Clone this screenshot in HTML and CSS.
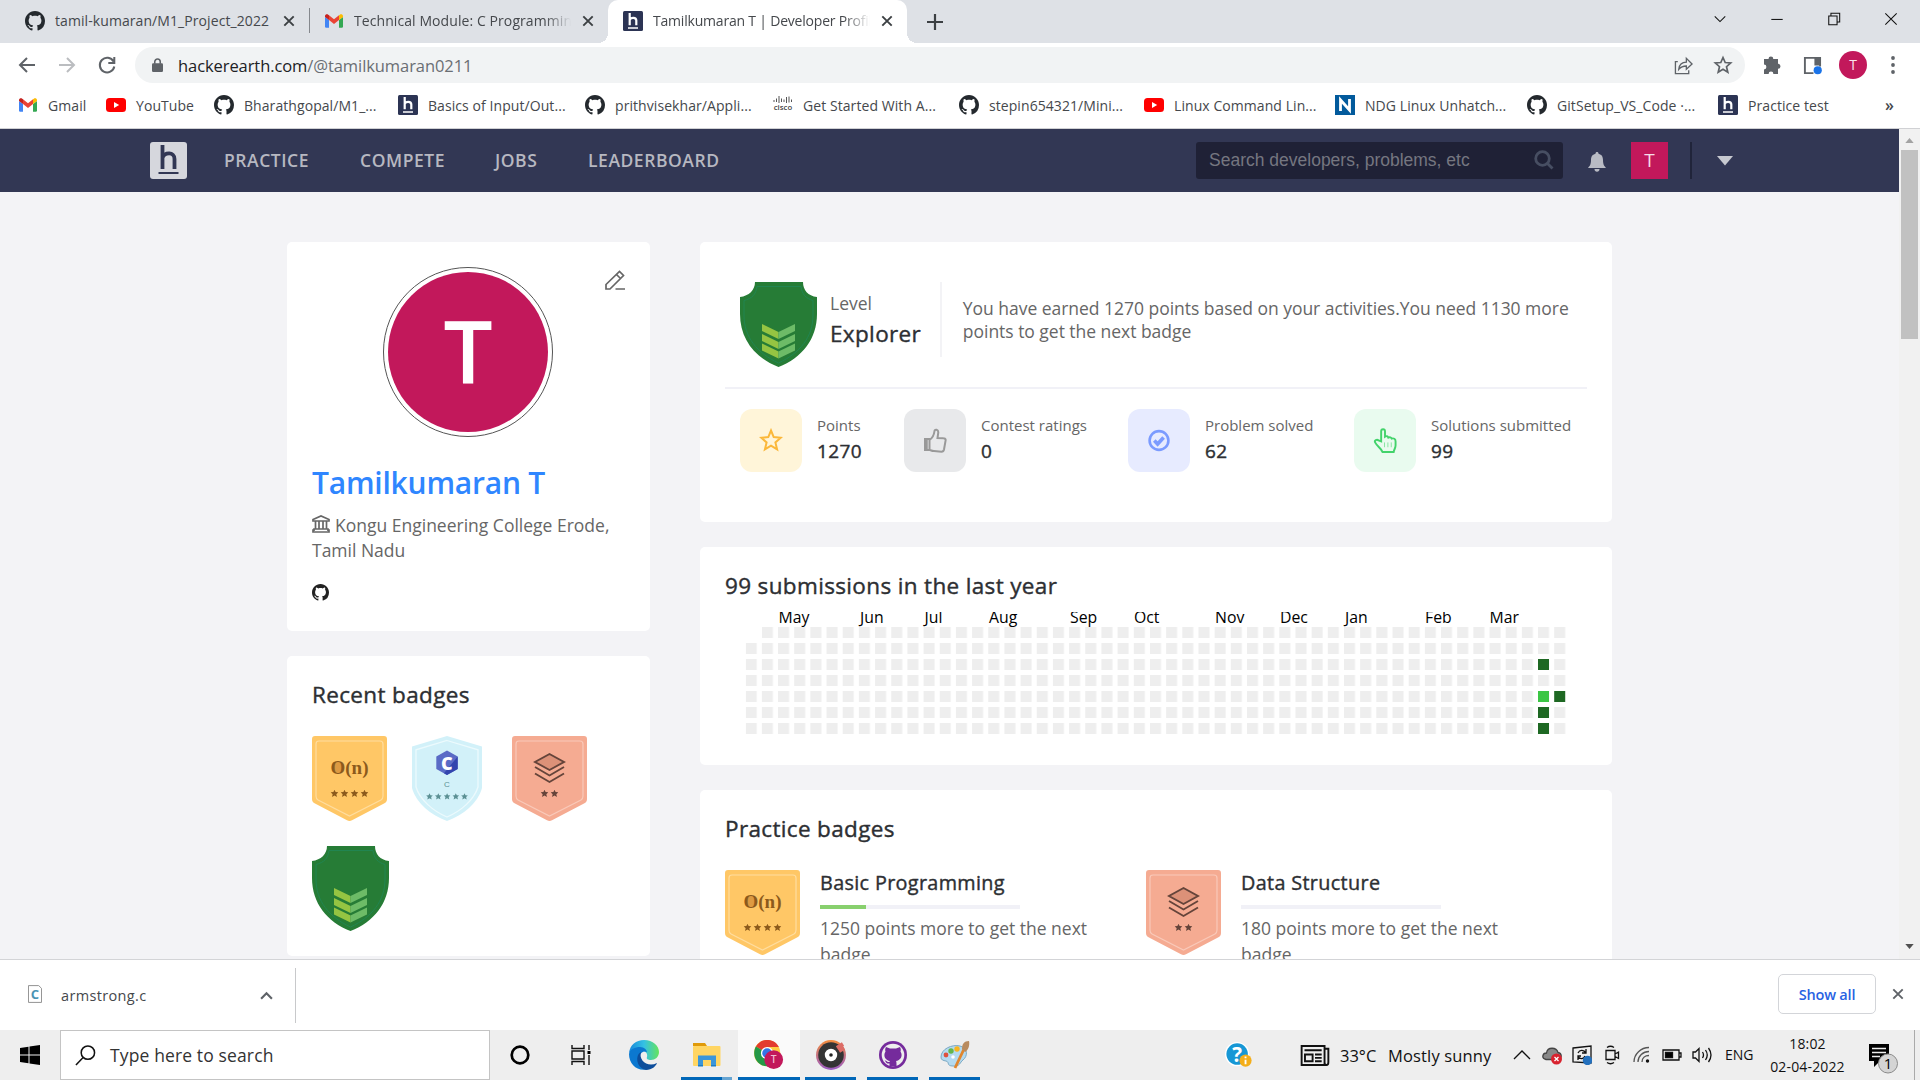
FILE: index.html
```html
<!DOCTYPE html>
<html lang="en">
<head>
<meta charset="utf-8">
<title>Tamilkumaran T | Developer Profile</title>
<link rel="stylesheet" href="styles.css">
</head>
<body>
<svg class="defs" width="0" height="0" aria-hidden="true">
  <symbol id="github" viewBox="0 0 16 16"><path d="M8 0C3.58 0 0 3.58 0 8c0 3.54 2.29 6.53 5.47 7.59.4.07.55-.17.55-.38 0-.19-.01-.82-.01-1.49-2.01.37-2.53-.49-2.69-.94-.09-.23-.48-.94-.82-1.13-.28-.15-.68-.52-.01-.53.63-.01 1.08.58 1.23.82.72 1.21 1.87.87 2.33.66.07-.52.28-.87.51-1.07-1.78-.2-3.64-.89-3.64-3.95 0-.87.31-1.59.82-2.15-.08-.2-.36-1.02.08-2.12 0 0 .67-.21 2.2.82.64-.18 1.32-.27 2-.27s1.36.09 2 .27c1.53-1.04 2.2-.82 2.2-.82.44 1.1.16 1.92.08 2.12.51.56.82 1.27.82 2.15 0 3.07-1.87 3.75-3.65 3.95.29.25.54.73.54 1.48 0 1.07-.01 1.93-.01 2.2 0 .21.15.46.55.38A8.01 8.01 0 0 0 16 8c0-4.42-3.58-8-8-8z"/></symbol>
  <symbol id="gmail" viewBox="0 0 20 20"><path fill="#4285f4" d="M1 6v9.500a1.200 1.200 0 0 0 1.200 1.200H5V9z"/><path fill="#34a853" d="M19 6v9.500a1.200 1.200 0 0 1-1.200 1.200H15V9z"/><path fill="#ea4335" d="M5 4.300l5 4 5-4V9l-5 4-5-4z"/><path fill="#c5221f" d="M1 5.200C1 3.400 3 2.800 4.200 3.700L5 4.300V9L1 6z"/><path fill="#fbbc04" d="M19 5.200c0-1.800-2-2.400-3.200-1.500l-.8.600V9l4-3z"/></symbol>
  <symbol id="youtube" viewBox="0 0 20 20"><rect y="3" width="20" height="14" rx="3.500" fill="#f00"/><path fill="#fff" d="M8 7l5.200 3L8 13z"/></symbol>
  <symbol id="hlogo" viewBox="0 0 20 20"><rect width="20" height="20" rx="1.500" fill="#2c3454"/><path fill="none" stroke="#fff" stroke-width="2.200" d="M6.700 2v12.300M6.700 9c1-2.800 6.600-3 6.600.5v4.800"/><path stroke="#fff" stroke-width="1.500" d="M5 17h10"/></symbol>
  <symbol id="cross" viewBox="0 0 12 12"><path fill="none" stroke="currentColor" stroke-width="1.900" d="M1.300 1.300l9.400 9.400M10.700 1.300l-9.400 9.400"/></symbol>
  <symbol id="star" viewBox="0 0 10 10"><path d="M5 .2l1.400 3 3.400.3-2.500 2.300.8 3.500L5 7.500 1.900 9.300l.8-3.500L.2 3.500l3.400-.3z"/></symbol>
  <symbol id="explorer-badge" viewBox="0 0 77 85"><path fill="#267c36" d="M15 0h48c0 8 5 14 14 15v17c0 25-15 44-38.500 53C15 76 0 57 0 32V15c9-1 15-7 15-15z"/><path fill="none" stroke="#218551" d="M17 4.500h44c1 8 5 12 12 14V33c0 22-13 38-34.500 48C17 71 4 55 4 33V18.500c8-2 12-6 13-14z"/><g fill="#95c442"><path d="M22 42l16.500 8v7L22 49zM22 52l16.500 8v7L22 59zM22 61.500l16.500 8v7L22 68.500z"/></g><g fill="#6dbb67"><path d="M55 42l-16.500 8v7L55 49zM55 52l-16.500 8v7L55 59zM55 61.500l-16.500 8v7L55 68.500z"/></g></symbol>
  <symbol id="basic-badge" viewBox="0 0 75 85"><path fill="#ffc766" d="M3 0h69a3 3 0 0 1 3 3v60q0 3-3 4.500L40 84.300q-2.500 1.200-5 0L3 67.500Q0 66 0 63V3a3 3 0 0 1 3-3z"/><path fill="none" stroke="#ffdd9f" stroke-width="1.200" d="M7 5h61q3 0 3 3v52q0 3-2 4L37.500 80 6 64q-2-1-2-4V8q0-3 3-3z"/><ellipse cx="25.500" cy="31.500" rx="5" ry="6" fill="#dd9a42"/><text x="37.500" y="38" text-anchor="middle" font-family="Liberation Serif, serif" font-weight="bold" font-size="19" fill="#8c5a1c">O(n)</text><g fill="#8c5a1c"><use href="#star" x="18.500" y="53.500" width="8" height="8"/><use href="#star" x="28.500" y="53.500" width="8" height="8"/><use href="#star" x="38.500" y="53.500" width="8" height="8"/><use href="#star" x="48.500" y="53.500" width="8" height="8"/></g></symbol>
  <symbol id="data-badge" viewBox="0 0 75 85"><path fill="#f5ab92" d="M3 0h69a3 3 0 0 1 3 3v60q0 3-3 4.500L40 84.300q-2.500 1.200-5 0L3 67.500Q0 66 0 63V3a3 3 0 0 1 3-3z"/><path fill="none" stroke="#f9c9b9" stroke-width="1.200" d="M7 5h61q3 0 3 3v52q0 3-2 4L37.500 80 6 64q-2-1-2-4V8q0-3 3-3z"/><path fill="#dc9178" stroke="#65443a" stroke-width="1.900" d="M37.500 18L52 26l-14.500 8L23 26z"/><path fill="none" stroke="#65443a" stroke-width="1.900" d="M23 31l14.500 8.500L52 31M23 37.500L37.500 46 52 37.500"/><g fill="#65443a"><use href="#star" x="28.500" y="53.500" width="8" height="8"/><use href="#star" x="38.500" y="53.500" width="8" height="8"/></g></symbol>
  <symbol id="c-badge" viewBox="0 0 70 85"><path fill="#d2f1f9" d="M35 0l35 10.500V52C66 67 51 79 35 85 19 79 4 67 0 52V10.500z"/><path fill="none" stroke="#ecfafd" stroke-width="1.300" d="M35 4.500l31 9.300V51C62 64 49 75 35 81 21 75 8 64 4 51V13.800z"/><path fill="#5a6bc6" d="M35 14.500l10.700 6v12.500L35 39l-10.700-6V20.500z"/><path fill="#3345ae" d="M45.700 20.500V33L35 39l-3-1.700z"/><text x="34.800" y="33.500" text-anchor="middle" font-family="Open Sans, sans-serif" font-weight="800" font-size="18" fill="#fff">C</text><text x="35" y="51" text-anchor="middle" font-family="Liberation Sans, sans-serif" font-size="8" fill="#5b9094">C</text><g fill="#5b9094"><use href="#star" x="14" y="57" width="7" height="7"/><use href="#star" x="22.800" y="57" width="7" height="7"/><use href="#star" x="31.600" y="57" width="7" height="7"/><use href="#star" x="40.300" y="57" width="7" height="7"/><use href="#star" x="49" y="57" width="7" height="7"/></g></symbol>
</svg>

<header class="tabs">
  <div class="tab tab-first"><svg class="i20 ink"><use href="#github"/></svg><span class="tab-title">tamil-kumaran/M1_Project_2022</span><svg class="close"><use href="#cross"/></svg></div>
  <div class="tab tab-mail"><svg class="i20"><use href="#gmail"/></svg><span class="tab-title fade">Technical Module: C Programming</span><svg class="close"><use href="#cross"/></svg></div>
  <div class="tab tab-active"><svg class="i20"><use href="#hlogo"/></svg><span class="tab-title fade">Tamilkumaran T | Developer Profile</span><svg class="close"><use href="#cross"/></svg></div>
  <svg class="new-tab" viewBox="0 0 16 16"><path stroke="#3c4043" stroke-width="2.200" d="M8 0v16M0 8h16"/></svg>
  <div class="window-controls">
    <svg viewBox="0 0 16 16"><path d="M2 5l6 6 6-6"/></svg>
    <svg viewBox="0 0 16 16"><path d="M1.500 8.500h13"/></svg>
    <svg viewBox="0 0 16 16"><path d="M2 4.500h9.500v10H2zM4.500 4.500v-3H14.500v10h-3"/></svg>
    <svg viewBox="0 0 16 16"><path d="M1.500 1.500l13 13M14.500 1.500l-13 13"/></svg>
  </div>
</header>

<div class="toolbar">
  <svg class="nav-icon" viewBox="0 0 20 20"><path d="M18 10H3M10 3l-7 7 7 7"/></svg>
  <svg class="nav-icon disabled" viewBox="0 0 20 20"><path d="M2 10h15M10 3l7 7-7 7"/></svg>
  <svg class="nav-icon" viewBox="0 0 20 20"><path d="M16.500 6.500A7.300 7.300 0 1 0 17.300 11.500M17.300 2v6h-6"/></svg>
  <div class="omnibox">
    <svg class="lock" viewBox="0 0 12 16"><rect y="5.500" width="12" height="9.500" rx="1.300" fill="#5f6368"/><path fill="none" stroke="#5f6368" stroke-width="1.700" d="M3 6V4a3 3 0 0 1 6 0v2"/></svg>
    <span class="url">hackerearth.com<span>/@tamilkumaran0211</span></span>
    <svg class="share" viewBox="0 0 20 20"><path d="M4 6H1.500v12.500H15.500V15M5 14c.5-5 3-7.500 8-7.500V2.500l6 6-6 5.500v-3.500c-3 0-5.500.5-8 3.500z"/></svg>
    <svg class="bookmark-star" viewBox="0 0 20 20"><path d="M10 2.500l2.200 5 5.500.5-4.200 3.700 1.300 5.500L10 14.300l-4.800 2.900 1.300-5.500L2.300 8l5.500-.5z"/></svg>
  </div>
  <svg class="puzzle" viewBox="0 0 20 20"><path fill="#5f6368" d="M6.500 4a2.400 2.400 0 0 1 4.800 0H16v4.800a2.500 2.500 0 0 1 0 5V19h-4.600a2.400 2.400 0 0 0-4.800 0H2v-4.600a2.400 2.400 0 0 0 0-4.800V4z"/></svg>
  <svg class="side-panel" viewBox="0 0 20 20"><path fill="none" stroke="#5f6368" stroke-width="2" d="M11 18H2V2h16v9"/><path fill="#5f6368" d="M12 2h6v8h-6z"/><circle cx="15.500" cy="15" r="4.300" fill="#1a73e8"/></svg>
  <div class="profile">T</div>
  <svg class="kebab" viewBox="0 0 4 18"><circle cx="2" cy="2" r="1.900"/><circle cx="2" cy="9" r="1.900"/><circle cx="2" cy="16" r="1.900"/></svg>
</div>

<nav class="bookmarks">
  <svg class="i20"><use href="#gmail"/></svg><span>Gmail</span>
  <svg class="i20"><use href="#youtube"/></svg><span>YouTube</span>
  <svg class="i20 ink"><use href="#github"/></svg><span>Bharathgopal/M1_...</span>
  <svg class="i20"><use href="#hlogo"/></svg><span>Basics of Input/Out...</span>
  <svg class="i20 ink"><use href="#github"/></svg><span>prithvisekhar/Appli...</span>
  <svg class="i20" viewBox="0 0 20 20"><path stroke="#555" stroke-width="1" d="M1 5v2M3.500 3.500v3.500M6 1v7M8.500 3.500v3.500M11 4.500v2.500M13.500 2v6M16 1.500v6M18.500 4.500v2.500"/><text x="10" y="14.500" text-anchor="middle" font-family="Open Sans, sans-serif" font-weight="600" font-size="7.800" fill="#444">cisco</text></svg><span>Get Started With A...</span>
  <svg class="i20 ink"><use href="#github"/></svg><span>stepin654321/Mini...</span>
  <svg class="i20"><use href="#youtube"/></svg><span>Linux Command Lin...</span>
  <svg class="i20" viewBox="0 0 20 20"><rect width="20" height="20" fill="#025a9c"/><path fill="none" stroke="#fff" stroke-width="2.800" d="M5.500 16V5l9 10V4"/></svg><span>NDG Linux Unhatch...</span>
  <svg class="i20 ink"><use href="#github"/></svg><span>GitSetup_VS_Code ·...</span>
  <svg class="i20"><use href="#hlogo"/></svg><span>Practice test</span>
  <b>»</b>
</nav>

<div class="viewport">
<div class="page">
  <nav class="site-nav">
    <svg class="site-logo" viewBox="0 0 37 37"><rect width="37" height="37" rx="3" fill="#d6d7dd"/><path fill="none" stroke="#323754" stroke-width="3.800" d="M12.500 3v24M12.500 16c2-6 12-6.500 12 1v10"/><path stroke="#323754" stroke-width="2" d="M8.500 31h20"/></svg>
    <a class="practice">PRACTICE</a><a class="compete">COMPETE</a><a class="jobs">JOBS</a><a>LEADERBOARD</a>
    <div class="search">Search developers, problems, etc<svg viewBox="0 0 20 20"><circle cx="8.500" cy="8.500" r="6.800"/><path d="M13.500 13.500l5 5"/></svg></div>
    <svg class="bell" viewBox="0 0 18 20"><path fill="#b9bbc4" d="M9 0c1 0 1.500.7 1.500 1.700C14 2.500 15 5 15 8c0 5 1.500 6 3 8H0c1.500-2 3-3 3-8 0-3 1-5.500 4.500-6.300C7.500.7 8 0 9 0zM6.500 17h5c0 2-1 2.700-2.500 2.700S6.500 19 6.500 17z"/></svg>
    <div class="nav-avatar">T</div>
    <i class="nav-divider"></i>
    <svg class="caret" viewBox="0 0 16 10"><path fill="#c7c9d0" d="M0 0h16L8 9.500z"/></svg>
  </nav>
  <main class="content">
    <aside class="left">
      <section class="card profile-card">
        <div class="avatar"><span>T</span></div>
        <svg class="edit" viewBox="0 0 20 20"><path d="M1 19v-4.500L14.500 1.500l4 4L5 19zM11.500 4.500l4 4M10.500 19H20"/></svg>
        <h1>Tamilkumaran T</h1>
        <p class="college"><svg viewBox="0 0 18 18"><path d="M1 6V4.500L9 1l8 3.500V6zM3.500 6v8M7 6v8M11 6v8M14.500 6v8M2 14h14v1.200h1V17H1v-1.800h1z"/></svg>Kongu Engineering College Erode, Tamil Nadu</p>
        <svg class="gh"><use href="#github"/></svg>
      </section>
      <section class="card recent">
        <h2>Recent badges</h2>
        <div class="badges"><svg class="b75"><use href="#basic-badge"/></svg><svg class="b70"><use href="#c-badge"/></svg><svg class="b75"><use href="#data-badge"/></svg><svg class="b77"><use href="#explorer-badge"/></svg></div>
      </section>
    </aside>
    <div class="right">
      <section class="card stats-card">
        <div class="level">
          <svg class="b77"><use href="#explorer-badge"/></svg>
          <div class="level-name"><span>Level</span><strong>Explorer</strong></div>
          <p>You have earned 1270 points based on your activities.You need 1130 more points to get the next badge</p>
        </div>
        <div class="stats">
          <div class="tile yellow"><svg viewBox="0 0 24 24"><path d="M12 2l2.700 6.600 7.100.6-5.400 4.700 1.700 7L12 17.100l-6.100 3.800 1.700-7L2.200 9.200l7.100-.6z"/></svg></div><div class="stat"><span>Points</span><strong>1270</strong></div>
          <div class="tile gray"><svg viewBox="0 0 24 24"><path d="M2 10.500h4.500v11H2zM6.500 11.500c3-2 4.500-5 5-9 .3-2 4-1.600 3.800 1.500L14.500 9.500l6 .3c1.800 0 2.500 1.300 2 2.700L21 21c-.3 1.500-1.200 2.200-2.500 2.200L11 22.500c-2 0-3-.7-4.500-1.200z"/><path d="M3.500 11v10" stroke-width="2.500"/></svg></div><div class="stat"><span>Contest ratings</span><strong>0</strong></div>
          <div class="tile blue"><svg viewBox="0 0 24 24"><circle cx="12" cy="12" r="9.400" stroke-width="2.600"/><path d="M7.300 12l3.300 3.500 6-6.500" stroke-width="3.600"/></svg></div><div class="stat"><span>Problem solved</span><strong>62</strong></div>
          <div class="tile green"><svg viewBox="0 0 24 26"><path d="M8 14V3.500C8 .5 12 .5 12 3.500V9c1.500-1 3-.5 3.500 1 1.500-.7 3-.2 3.500 1 2-.5 4 0 4 3v4c0 3-1.500 4-2 7H9.500C8 21 4 19.500 1.700 15c-1-2 1.800-3.700 3.600-2z"/><path d="M11.500 15v5M15 15v5M18.500 15v5" stroke-width="1" opacity=".6"/></svg></div><div class="stat"><span>Solutions submitted</span><strong>99</strong></div>
        </div>
      </section>
      <section class="card activity">
        <h2>99 submissions in the last year</h2>
        <svg class="heatmap" viewBox="0 0 840 130">
          <defs><pattern id="days" width="16.170" height="16" patternUnits="userSpaceOnUse"><rect width="11" height="11" fill="#eee"/></pattern></defs>
          <g class="months"><text x="33.500" y="11">May</text><text x="115" y="11">Jun</text><text x="179.500" y="11">Jul</text><text x="244" y="11">Aug</text><text x="325" y="11">Sep</text><text x="389" y="11">Oct</text><text x="470" y="11">Nov</text><text x="535" y="11">Dec</text><text x="600" y="11">Jan</text><text x="680" y="11">Feb</text><text x="744.500" y="11">Mar</text></g>
          <g transform="translate(.7 15)"><path fill="url(#days)" d="M16.170 0H824V108H0V16H16.170z"/>
          <g fill="#1e6823"><rect x="792.300" y="32" width="11" height="11"/><rect x="808.500" y="64" width="11" height="11"/><rect x="792.300" y="80" width="11" height="11"/><rect x="792.300" y="96" width="11" height="11"/></g><rect x="792.300" y="64" width="11" height="11" fill="#3bc644"/></g>
        </svg>
      </section>
      <section class="card practice-card">
        <h2>Practice badges</h2>
        <div class="practice-grid">
          <article><svg class="b75"><use href="#basic-badge"/></svg><div><h3>Basic Programming</h3><div class="bar"><i style="width:23%"></i></div><p>1250 points more to get the next badge</p></div></article>
          <article><svg class="b75"><use href="#data-badge"/></svg><div><h3>Data Structure</h3><div class="bar"></div><p>180 points more to get the next badge</p></div></article>
        </div>
      </section>
    </div>
  </main>
</div>
<div class="scrollbar"><svg viewBox="0 0 10 6"><path fill="#a3a3a3" d="M0 6l5-6 5 6z"/></svg><i></i><svg viewBox="0 0 10 6"><path fill="#505050" d="M0 0l5 6 5-6z"/></svg></div>
</div>

<div class="downloads">
  <div class="download"><svg class="file" viewBox="0 0 15 19"><path fill="#fff" stroke="#8a8a8a" d="M.5.5h11l3 3v15H.5z"/><text x="7.500" y="15" text-anchor="middle" font-family="Open Sans, sans-serif" font-weight="bold" font-size="14" fill="#4a94b4">C</text></svg><span>armstrong.c</span><svg class="chevron" viewBox="0 0 12 8"><path d="M1 7l5-5 5 5"/></svg></div>
  <button>Show all</button><svg class="shelf-close"><use href="#cross"/></svg>
</div>

<footer class="taskbar">
  <div class="start"><svg viewBox="0 0 20 20"><path d="M0 3l8.500-1.200v7.700H0zM9.500 1.600L20 0v9.500H9.500zM0 10.500h8.500v7.700L0 17zM9.500 10.500H20V20L9.500 18.400z"/></svg></div>
  <div class="task-search"><svg viewBox="0 0 22 22"><circle cx="13.500" cy="8" r="7"/><path d="M8.500 13L1 21"/></svg><span>Type here to search</span></div>
  <div class="task-icon cortana"><svg viewBox="0 0 30 30"><circle cx="15" cy="15" r="8.300" fill="none" stroke="#000" stroke-width="2.700"/></svg></div>
  <div class="task-icon task-view"><svg viewBox="0 0 30 30"><path fill="none" stroke="#111" stroke-width="1.400" d="M6 5v3.500h12V5M6 11h12v8H6zM6 25v-3.500h12V25M23 5v5M23 15v10"/><path d="M21.500 11h3v3h-3z"/></svg></div>
  <div class="task-icon"><svg viewBox="0 0 30 30"><defs><linearGradient id="edge" x1="0" x2="1"><stop stop-color="#1688da"/><stop offset=".5" stop-color="#34c1e4"/><stop offset="1" stop-color="#66e45c"/></linearGradient></defs><path fill="url(#edge)" d="M0 13C1 5 7 0 15 0c9 0 15 6 15 12 0 5-4 8-8 8-3 0-5-1-4-3 1-4-2-6-5-6-6 0-11 0-13 2z"/><path fill="#0b78d0" d="M0 14c1-5 6-7 11-7 4 0 7 3 7 5-4-2-9 2-7 9 1 5 5 8 8 8C9 32 0 25 0 14z"/><path fill="#0c4d9b" d="M12 12c-6 3-5 16 5 18 6 0 10-4 11-7-2 1-4 1.500-6 1.500-7 0-12-6-10-12.500z"/></svg></div>
  <div class="task-icon open grouped"><svg viewBox="0 0 30 30"><path fill="#e09a09" d="M1 3h12l2 3H1z"/><rect x="1" y="6" width="27.500" height="20" rx="1" fill="#ffd562"/><path fill="#3b96d9" d="M6 15.500h18V26h-5v-6h-8v6H6z"/><path fill="#1d7cc4" d="M6 25h5v1.500H6zM19 25h5v1.500h-5z"/></svg></div>
  <div class="task-icon open current"><svg class="chrome" viewBox="0 0 32 32"><circle cx="14" cy="14" r="14" fill="#ffcd40"/><path fill="#e33b2e" d="M14 14L2 7C8-3 22-2 26.500 7.500H14z"/><path fill="#249847" d="M14 14L2 7C-3 16 3 28 14 28l6-11z"/><circle cx="14" cy="14" r="6.600" fill="#fff"/><circle cx="14" cy="14" r="5.200" fill="#3274e6"/><circle cx="21" cy="21" r="10" fill="#c2185b"/><text x="21" y="25" text-anchor="middle" font-family="Open Sans, sans-serif" font-size="11" font-weight="600" fill="#f0b9d0">T</text></svg></div>
  <div class="task-icon open"><svg viewBox="0 0 30 30"><defs><linearGradient id="ring" x2="0" y2="1"><stop stop-color="#f28b3b"/><stop offset="1" stop-color="#9a5cc5"/></linearGradient></defs><circle cx="15" cy="15" r="15" fill="url(#ring)"/><circle cx="15" cy="15" r="12.800" fill="#343434"/><circle cx="15" cy="15" r="4" fill="#222" stroke="#fff" stroke-width="4.400"/><path stroke="#dc6c66" stroke-width="4" d="M21 8l6-4M23 11l5-3"/></svg></div>
  <div class="task-icon open"><svg viewBox="0 0 30 30"><circle cx="15" cy="15" r="14" fill="#752b9c"/><circle cx="15" cy="15" r="11.300" fill="#eee"/><path fill="#752b9c" d="M8 7l4 1.500h6L22 7c1 2 1 3 .5 4.500 3 5-.5 9-4.500 9.500.6 1 .5 2.500.5 5h-7v-2.500c-4 .5-3.500-2.500-5-3 2-.5 2.500 2 5 1.500 0-.5.200-.8.500-1C8 20.500 4.500 16.500 7.500 11.500 7 10 7 9 8 7z"/></svg></div>
  <div class="task-icon open"><svg viewBox="0 0 30 30"><path fill="#b4daf0" stroke="#7ba9c4" d="M1 17C1 9 12 4 20 6c8 2 8 10 3 14-3 2-3 7-10 6-7 0-3-4-7-5-3-.5-5-1-5-4z"/><circle cx="6" cy="15" r="2.400" fill="#df503d"/><circle cx="11" cy="11" r="2.700" fill="#64b64d"/><circle cx="17" cy="9" r="2.700" fill="#f9b41e"/><circle cx="13" cy="17" r="1.800" fill="#fff"/><path stroke="#e0862e" stroke-width="2.800" d="M15 28l9-19"/><path fill="#b98b5f" d="M22 9c0-5 2-8 7-8 1 5-1 9-4 11z"/></svg></div>
  <div class="weather">
    <svg class="help" viewBox="0 0 30 28"><circle cx="13" cy="13" r="13" fill="#fff"/><circle cx="13" cy="13" r="11.500" fill="#1697d5"/><text x="13" y="21" text-anchor="middle" font-family="Open Sans, sans-serif" font-weight="bold" font-size="22" fill="#fff">?</text><circle cx="22" cy="20" r="6.500" fill="#f4ae1a"/><path stroke="#fff" stroke-width="2" d="M22 19v5M22 15.500v2"/></svg>
    <svg class="news" viewBox="0 0 30 22"><path fill="none" stroke="#111" stroke-width="2" d="M1 1h24v20H1zM25 4h4v14c0 4-4 4-4 0M4 5.500h18M4.500 10h8v7h-8zM15 10h7M15 13.500h7M15 17h7"/></svg>
    <span class="temp">33°C</span><span class="sky">Mostly sunny</span>
  </div>
  <div class="tray">
    <svg viewBox="0 0 20 20"><path d="M2 14l8-8 8 8"/></svg>
    <svg viewBox="0 0 20 20"><path fill="#888" stroke="#444" d="M4 14.500c-5-1-3.500-6.500.5-6.500 1-6.500 10-6 11.500-.5 4 .5 4.500 6 0 7z"/><circle cx="14.500" cy="14" r="5.500" fill="#d8232f" stroke="none"/><path stroke="#fff" d="M12.500 12l4 4M16.500 12l-4 4"/></svg>
    <svg viewBox="0 0 20 20"><path d="M1 3l18-2v17l-18-1zM6 8c2-4 6-3 8 0M14 4v4h-4M13 11c-2 4-6 3-7 0M6 15v-4h3"/><circle cx="15.500" cy="15.500" r="4.700" fill="#2370bd" stroke="none"/></svg>
    <svg viewBox="0 0 20 20"><path d="M4 5.500h9v9H4zM13 9l3.500-2v6.500L13 11.500M5 2.500q3.500-2.500 7 0M5 17.500q3.500 2.500 7 0"/></svg>
    <svg viewBox="0 0 20 20"><path stroke="#555" d="M2 17C2 9 9 2.500 17 2.500M6 17c0-6 5-10.500 11-10.500M10 17c0-4 3-6.500 7-6.500"/><circle cx="15.500" cy="16" r="1.700" fill="#111" stroke="none"/></svg>
    <svg viewBox="0 0 20 20"><path d="M1 5h16v10H1zM17 8h2v4h-2"/><path fill="#000" d="M3.500 7.500h7v5h-7z"/></svg>
    <svg viewBox="0 0 20 20"><path d="M1 7h2.500L7 3.500v13L3.500 13H1zM10.500 7q2 3 0 6M13.500 5q3.500 5 0 10M16.500 3q5 7 0 14"/></svg>
  </div>
  <span class="lang">ENG</span>
  <div class="clock"><span>18:02</span><span>02-04-2022</span></div>
  <div class="notify"><svg viewBox="0 0 34 32"><path d="M1 1h20v17h-9l-6 6v-6H1z"/><path stroke="#eee" stroke-width="1.700" d="M4 5.500h14M4 9.500h14M4 13.500h8"/><circle cx="20" cy="20.500" r="9.500" fill="#d4d4d4" stroke="#8a8a8a"/><text x="20" y="26" text-anchor="middle" font-family="Open Sans, sans-serif" font-size="15">1</text></svg></div>
  <i class="peek"></i>
</footer>
</body>
</html>
```
FILE: styles.css
```css
* { box-sizing: border-box; }
body { margin: 0; width: 1920px; height: 1080px; overflow: hidden; display: flex; flex-direction: column; font-family: "Open Sans", "Noto Sans", sans-serif; color: #2d2f33; background: #fff; }
svg { display: block; flex: none; }
h1, h2, h3, p { margin: 0; }
.defs { display: none; }
.i20 { width: 20px; height: 20px; }
.ink { fill: #24292e; }

/* browser chrome */
.tabs { height: 43px; flex: none; background: #dee1e6; display: flex; align-items: center; font-size: 14px; color: #45484c; }
.tab { height: 43px; display: flex; align-items: center; position: relative; padding-bottom: 2px; }
.tab-title { width: 217px; margin-left: 10px; white-space: nowrap; overflow: hidden; letter-spacing: .08px; }
.tab-first { width: 310px; padding-left: 25px; }
.tab-first::after { content: ""; width: 1px; height: 25px; background: #85888d; margin-left: 14px; }
.tab-mail { width: 298px; padding-left: 14px; }
.tab-active { width: 299px; padding-left: 15px; background: #fff; border-radius: 10px 10px 0 0; }
.tab-active .tab-title { letter-spacing: -.2px; }
.tab-active::before, .tab-active::after { content: ""; position: absolute; bottom: 0; width: 10px; height: 10px; }
.tab-active::before { left: -10px; background: radial-gradient(circle at 0 0, transparent 10px, #fff 10px); }
.tab-active::after { right: -10px; background: radial-gradient(circle at 100% 0, transparent 10px, #fff 10px); }
.fade { -webkit-mask-image: linear-gradient(90deg, #000 88%, transparent); mask-image: linear-gradient(90deg, #000 88%, transparent); }
.close { width: 12px; height: 12px; margin-left: 11px; color: #3c4043; }
.new-tab { width: 16px; height: 16px; margin-left: 20px; }
.window-controls { margin-left: auto; display: flex; gap: 43px; padding: 0 22px 6px 0; }
.window-controls svg { width: 14px; height: 14px; fill: none; stroke: #111; stroke-width: 1.2; }
.toolbar { height: 44px; flex: none; display: flex; align-items: center; padding-left: 17px; }
.nav-icon { width: 20px; height: 20px; margin-right: 20px; fill: none; stroke: #5f6368; stroke-width: 2; }
.nav-icon:nth-child(3) { margin-right: 18px; }
.disabled { stroke: #bbbdc0; }
.omnibox { width: 1610px; height: 36px; background: #f1f3f4; border-radius: 18px; display: flex; align-items: center; padding: 0 12px 0 17px; }
.lock { width: 11px; height: 15px; }
.url { margin-left: 15px; font-size: 16.500px; color: #202124; letter-spacing: -.08px; }
.url span { color: #6a6e73; }
.share { width: 19px; height: 19px; margin-left: auto; fill: none; stroke: #5f6368; stroke-width: 1.400; }
.bookmark-star { width: 20px; height: 20px; margin-left: 20px; fill: none; stroke: #5f6368; stroke-width: 1.700; }
.puzzle { width: 20px; height: 20px; margin-left: 17px; }
.side-panel { width: 19px; height: 19px; margin-left: 21px; }
.profile { width: 28px; height: 28px; margin-left: 17px; border-radius: 50%; background: #c2185b; color: #fbe3ed; font-size: 14px; line-height: 28px; text-align: center; }
.kebab { width: 4px; height: 18px; margin-left: 24px; fill: #5f6368; }
.bookmarks { height: 42px; flex: none; border-bottom: 1px solid #d0d1d4; display: grid; grid-template-columns: 20px 68px 20px 88px 20px 164px 20px 167px 20px 168px 20px 166px 20px 165px 20px 171px 20px 172px 20px 171px 20px 147px 20px; padding: 0 0 5px 18px; align-items: center; font-size: 14px; color: #45484c; }
.bookmarks span { padding-left: 10px; white-space: nowrap; letter-spacing: .07px; }
.bookmarks b { font-size: 16px; line-height: 16px; font-weight: 600; }

/* site */
.viewport { height: 830px; flex: none; display: flex; overflow: hidden; }
.page { width: 1899px; background: #f3f3f6; }
.site-nav { height: 63px; background: #323754; display: flex; align-items: center; padding-left: 150px; color: #b7b8c1; font-size: 17.500px; font-weight: 600; letter-spacing: .55px; }
.site-nav a { line-height: 24px; padding-bottom: 1px; }
.site-logo { width: 37px; height: 37px; margin-right: 37px; }
.practice { width: 136px; }
.compete { width: 135px; }
.jobs { width: 93px; }
.search { width: 367px; height: 37px; margin-left: auto; border-radius: 3px; background: #1f2136; color: #757680; font: 17.500px/35px "Liberation Sans", sans-serif; letter-spacing: 0; padding: 0 9px 1px 13px; display: flex; justify-content: space-between; align-items: center; }
.search svg { width: 20px; height: 20px; fill: none; stroke: #474e62; stroke-width: 2.800; }
.bell { width: 18px; height: 20px; margin: 3px 25px 0; }
.nav-avatar { width: 37px; height: 37px; background: #c2185b; color: #f7dce7; font-size: 19px; font-weight: 400; line-height: 36px; text-align: center; letter-spacing: 0; }
.nav-divider { width: 2px; height: 37px; background: #20243a; margin: 0 25px 0 22px; }
.caret { width: 16px; height: 10px; margin-right: 166px; }
.content { display: flex; gap: 50px; padding: 50px 0 0 287px; }
.left { width: 363px; }
.right { width: 912px; }
.left, .right { display: flex; flex-direction: column; gap: 25px; }
.card { background: #fff; border-radius: 5px; padding: 25px; }
.profile-card { height: 389px; position: relative; }
.avatar { width: 170px; height: 170px; margin-left: 71px; border: 1px solid #555; border-radius: 50%; padding: 4px; }
.avatar span { display: block; height: 160px; border-radius: 50%; background: #c2185b; color: #fff; font-size: 87px; font-weight: 600; line-height: 156px; text-align: center; }
.edit { position: absolute; right: 25px; top: 28px; width: 20px; height: 20px; fill: none; stroke: #666; stroke-width: 1.700; }
h1 { font-size: 30px; line-height: 40px; font-weight: 600; color: #2f86ff; margin-top: 26px; letter-spacing: -.22px; }
.college { font-size: 17.500px; line-height: 25px; color: #666; margin-top: 10px; }
.college svg { display: inline-block; width: 18px; height: 18px; margin-right: 5px; vertical-align: -1px; fill: none; stroke: #666; stroke-width: 1.700; }
.gh { width: 17px; height: 17px; margin-top: 21px; fill: #222; }
/* half-step weight between regular and semibold */
h2, h3, strong { font-weight: 400; -webkit-text-stroke: .4px currentColor; letter-spacing: .35px; }
h2 { font-size: 22.500px; line-height: 28px; padding-bottom: 2px; }
.recent { height: 300px; }
.badges { margin-top: 25px; display: grid; grid-template-columns: repeat(3, 75px); gap: 25px; }
.b75 { width: 75px; height: 85px; }
.b70 { width: 70px; height: 85px; }
.b77 { width: 77px; height: 85px; }
.stats-card { height: 280px; padding-top: 40px; }
.level { height: 107px; display: flex; padding-left: 15px; border-bottom: 2px solid #f1f1f7; }
.level-name { width: 112px; height: 75px; margin-left: 13px; border-right: 2px solid #f3f3f6; padding-top: 7px; display: flex; flex-direction: column; }
.level-name span { font-size: 17.500px; line-height: 28px; color: #666; }
.level-name strong { font-size: 22.500px; line-height: 34px; }
.level p { width: 625px; margin-left: 21px; padding-top: 15px; font-size: 17.500px; line-height: 23px; color: #666; letter-spacing: -.03px; }
.stats { display: grid; grid-template-columns: 62px 102px 62px 162px 62px 164px 62px 170px; padding: 20px 0 0 15px; }
.tile { height: 63px; border-radius: 12px; display: flex; align-items: center; justify-content: center; }
.tile svg { width: 24px; height: 25px; fill: none; stroke: currentColor; stroke-width: 2; }
.yellow { background: #fff5d9; color: #fbb83a; }
.gray { background: #e8e9eb; color: #999; }
.blue { background: #e7ebff; color: #7b9bff; }
.green { background: #e9fbef; color: #43d36b; }
.stat { display: flex; flex-direction: column; padding: 5px 0 0 15px; white-space: nowrap; }
.stat span { font-size: 15px; line-height: 22px; color: #666; }
.stat strong { font-size: 19px; line-height: 31px; }
.activity { height: 218px; }
.heatmap { width: 840px; height: 130px; margin: 10px 0 0 20px; overflow: hidden; }
.months { font-size: 15.800px; fill: #000; }
.practice-card { height: 300px; }
.practice-grid { display: grid; grid-template-columns: 421px 400px; margin-top: 25px; }
article { display: flex; gap: 20px; }
article h3 { font-size: 19.800px; line-height: 26px; }
.bar { width: 200px; height: 4px; margin-top: 9px; background: #f1f1f7; }
.bar i { display: block; height: 4px; background: #88d06e; }
article p { width: 290px; margin-top: 6px; font-size: 17.500px; line-height: 26px; color: #666; }
.scrollbar { width: 21px; background: #f1f1f1; display: flex; flex-direction: column; align-items: center; padding: 9px 0 10px; }
.scrollbar svg { width: 9px; height: 5px; }
.scrollbar i { width: 17px; height: 189px; margin: 7px 0 auto; background: #c1c1c1; }

/* download shelf */
.downloads { height: 71px; flex: none; border-top: 1px solid #d3d4d7; display: flex; align-items: center; font-size: 14.500px; color: #45484c; }
.download { width: 296px; height: 55px; border-right: 1px solid #c8c9cb; display: flex; align-items: center; padding-left: 28px; }
.file { width: 14px; height: 18px; margin-bottom: 2px; }
.download span { width: 199px; margin-left: 19px; letter-spacing: .35px; }
.chevron { width: 13px; height: 9px; fill: none; stroke: #5f6368; stroke-width: 2; }
.downloads button { width: 98px; height: 40px; margin: 0 16px 2px auto; padding: 0; border: 1px solid #d3d5d9; border-radius: 5px; background: #fff; color: #2862e3; font: 600 14.500px "Open Sans", sans-serif; letter-spacing: -.2px; }
.shelf-close { width: 12px; height: 12px; margin: 0 16px 2px 0; color: #5f6368; }

/* taskbar */
.taskbar { height: 50px; flex: none; background: #eee; display: flex; color: #111; }
.start { width: 60px; padding: 15px 0 0 20px; }
.start svg { width: 20px; height: 20px; }
.task-search { width: 430px; height: 50px; background: #fff; border: 1px solid #c4c4c4; display: flex; align-items: center; padding-left: 14px; font-size: 17.500px; color: #333; letter-spacing: .13px; }
.task-search svg { width: 21px; height: 21px; margin-right: 14px; fill: none; stroke: #111; stroke-width: 1.600; }
.task-icon { width: 62px; height: 50px; display: flex; align-items: center; justify-content: center; }
.task-icon.cortana { width: 60px; }
.task-view { width: 61px; margin-right: 2px; }
.task-icon svg { width: 30px; height: 30px; }
.open { position: relative; }
.open::after { content: ""; position: absolute; bottom: 0; left: 5px; right: 6px; height: 3px; background: #0067b8; }
.grouped { margin-left: 1px; }
.grouped::after { background: linear-gradient(90deg, #0067b8 80%, #66a4d2 80%); }
.current { background: #fafafa; }
.current::after { left: 0; right: 0; }
.weather { margin-left: 239px; display: flex; align-items: center; font-size: 16.500px; width: 287px; white-space: nowrap; }
.help { width: 28px; height: 28px; }
.news { width: 30px; height: 21px; margin: 0 10px 0 47px; }
.temp { width: 48px; }
.sky { letter-spacing: .15px; }
.tray { display: flex; align-items: center; gap: 10px; }
.tray svg { width: 20px; height: 20px; fill: none; stroke: #111; stroke-width: 1.300; }
.lang { margin-left: 13px; line-height: 50px; font-size: 14px; width: 36px; }
.clock { width: 93px; display: flex; flex-direction: column; align-items: center; font-size: 14px; line-height: 23px; padding-top: 2px; letter-spacing: .15px; }
.notify { padding: 13px 0 0 14px; }
.notify svg { width: 34px; height: 32px; }
.peek { margin-left: auto; margin-right: 5px; width: 1px; background: #aaa; }
```
